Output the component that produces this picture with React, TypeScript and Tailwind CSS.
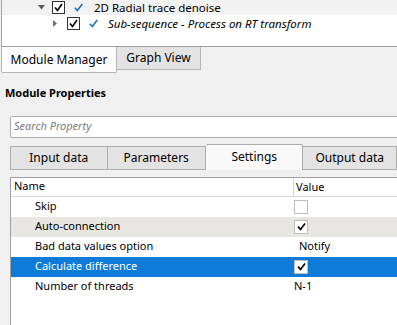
import React from 'react'

function BoxCheck({ checked }: { checked: boolean }) {
  return (
    <span className="flex h-[13px] w-[13px] shrink-0 items-center justify-center border border-[#333] bg-white">
      {checked && (
        <svg width="9" height="9" viewBox="0 0 9 9">
          <path d="M1 4.5 L3.5 7.5 L8 1" fill="none" stroke="#000" strokeWidth="1.6" />
        </svg>
      )}
    </span>
  )
}

function ValueCheck({ checked }: { checked: boolean }) {
  return (
    <span className="flex h-[14px] w-[14px] items-center justify-center border border-[#bdbdbd] bg-white">
      {checked && (
        <svg width="9" height="9" viewBox="0 0 9 9">
          <path d="M1 4.5 L3.5 7.5 L8 1.5" fill="none" stroke="#000" strokeWidth="1.7" />
        </svg>
      )}
    </span>
  )
}

function BlueCheck() {
  return (
    <svg className="shrink-0" width="9" height="9" viewBox="0 0 9 9">
      <path d="M0.8 4.8 L3.3 7.5 L8.3 1" fill="none" stroke="#1f6fc5" strokeWidth="1.6" />
    </svg>
  )
}

const rows = [
  { name: 'Skip', value: 'box', checked: false },
  { name: 'Auto-connection', value: 'box', checked: true, alt: true },
  { name: 'Bad data values option', value: 'Notify' },
  { name: 'Calculate difference', value: 'box', checked: true, selected: true },
  { name: 'Number of threads', value: 'N-1' },
]

export default function App() {
  return (
    <div className="h-[325px] w-[397px] overflow-hidden bg-[#f0f0f0] text-[11px] text-[#000] [font-family:'Noto_Sans',sans-serif]">
      {/* Tree */}
      <div className="ml-[1px] h-[47px] overflow-hidden border-b border-l border-[#a0a0a0] bg-white">
        <div className="flex h-[15px] items-center bg-[#f2f2f2]">
          <svg className="ml-[36px] shrink-0" width="7" height="5" viewBox="0 0 7 5">
            <path d="M0 0 H7 L3.5 4.5 Z" fill="#5a5a5a" />
          </svg>
          <span className="ml-[7px] shrink-0"><BoxCheck checked /></span>
          <span className="ml-[9px] shrink-0"><BlueCheck /></span>
          <span className="ml-[11px] shrink-0 whitespace-nowrap text-[11.5px]">2D Radial trace denoise</span>
        </div>
        <div className="flex h-[17px] items-center">
          <svg className="ml-[51px] shrink-0" width="4" height="7" viewBox="0 0 4 7">
            <path d="M0 0 L4 3.5 L0 7 Z" fill="#707070" />
          </svg>
          <span className="ml-[10px] shrink-0"><BoxCheck checked /></span>
          <span className="ml-[9px] shrink-0"><BlueCheck /></span>
          <span className="ml-[10px] shrink-0 whitespace-nowrap text-[11.5px] italic">Sub-sequence - Process on RT transform</span>
        </div>
      </div>

      {/* Bottom tabs */}
      <div className="flex h-[26px] items-start">
        <div className="ml-[1px] flex h-[26px] w-[116px] items-center justify-center rounded-b-[2px] border border-t-0 border-[#b5b5b5] bg-[#fcfcfc] text-[12px]">
          Module Manager
        </div>
        <div className="flex h-[23px] w-[84px] items-center justify-center border border-l-0 border-t-0 border-[#b5b5b5] bg-[#e3e3e3] text-[12px]">
          Graph View
        </div>
      </div>

      {/* Module Properties */}
      <div className="mt-[12px] pl-[5px] font-bold">Module Properties</div>

      <div className="ml-[10px] mt-[14px] flex h-[22px] w-[400px] items-center rounded-[2px] border border-[#abadb3] bg-white pl-[3px] italic text-[#7a7a7a]">
        Search Property
      </div>

      {/* Property tabs */}
      <div className="ml-[10px] mt-[6px] flex h-[26px] items-end">
        <div className="flex h-[24px] w-[99px] items-center justify-center border border-[#acacac] bg-[#e3e3e3] text-[12px]">Input data</div>
        <div className="flex h-[24px] w-[100px] items-center justify-center border border-l-0 border-[#acacac] bg-[#e3e3e3] text-[12px]">Parameters</div>
        <div className="flex h-[26px] w-[99px] items-center justify-center rounded-t-[2px] border border-b-0 border-l-0 border-[#acacac] bg-[#f9f9f9] text-[12px]">Settings</div>
        <div className="flex h-[24px] w-[95px] items-center justify-center border border-l-0 border-[#acacac] bg-[#e3e3e3] text-[12px]">Output data</div>
      </div>

      {/* Table */}
      <div className="ml-[10px] mt-[7px] h-[200px] border-l border-t border-[#a0a0a0] bg-white">
        <div className="flex h-[19px] items-center border-b border-[#d5d5d5]">
          <div className="w-[282px] pl-[3px]">Name</div>
          <div className="h-full border-l border-[#d5d5d5] pl-[2px] leading-[18px]">Value</div>
        </div>
        {rows.map((r) => (
          <div
            key={r.name}
            className={
              'flex h-[20px] items-center ' +
              (r.selected ? 'bg-[#0f7bd9] text-white' : r.alt ? 'bg-[#e8e6e2]' : 'bg-white')
            }
          >
            <div className="w-[283px] whitespace-nowrap pl-[24px]">{r.name}</div>
            <div className="text-black">
              {r.value === 'box' ? (
                <ValueCheck checked={!!r.checked} />
              ) : r.value === 'Notify' ? (
                <span className="pl-[5px]">Notify</span>
              ) : (
                <span>{r.value}</span>
              )}
            </div>
          </div>
        ))}
      </div>
    </div>
  )
}
